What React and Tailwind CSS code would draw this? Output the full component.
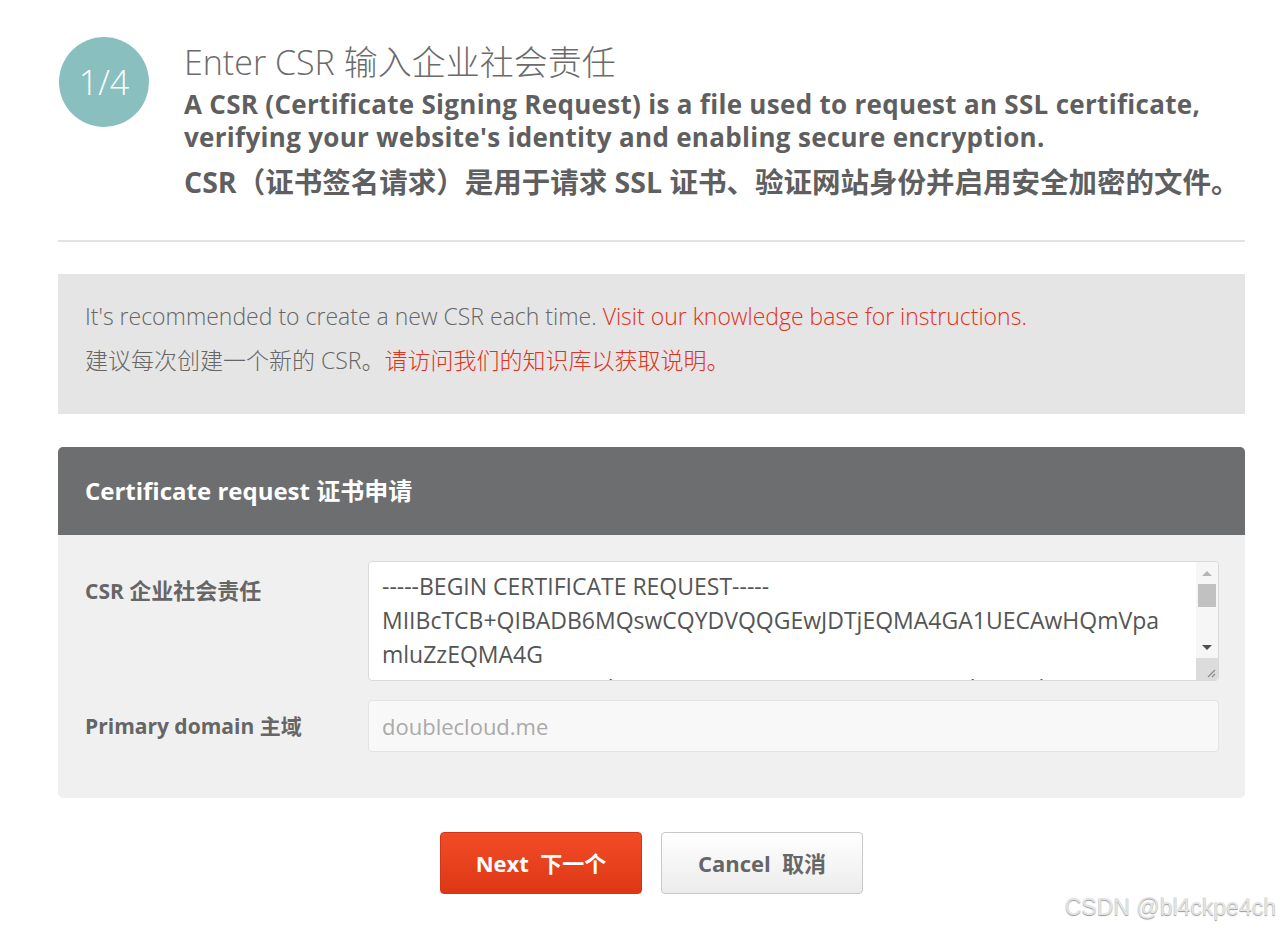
import React from "react";

const FONT = "font-['Open_Sans','Noto_Sans_CJK_SC',sans-serif]";

// CSR 文本框内容（按参考图逐行排好）
const CSR_LINES = [
  "-----BEGIN CERTIFICATE REQUEST-----",
  "MIIBcTCB+QIBADB6MQswCQYDVQQGEwJDTjEQMA4GA1UECAwHQmVpa",
  "mluZzEQMA4G",
  "A1UEBwwHQmVpamluZzEQMA4GA1UECgwHRG91YmxlQ2xvdWQxEDAOBgNVBAsM",
];

function StepHeader() {
  return (
    <div className="flex items-start pt-[37px]">
      <div className="ml-px flex h-[90px] w-[90px] shrink-0 items-center justify-center rounded-full bg-[#8abfbf]">
        <span className="text-[34px] font-light text-white">1/4</span>
      </div>
      <div className="ml-[35px] pt-[5px]">
        <h1 className="text-[34px] font-light leading-[40px] text-[#6b6b6b]">
          Enter CSR 输入企业社会责任
        </h1>
        <p className="mt-[6px] text-[26px] font-bold leading-[33px] tracking-[0.3px] text-[#5f5f5f]">
          A CSR (Certificate Signing Request) is a file used to request an SSL certificate,
          <br />
          verifying your website's identity and enabling secure encryption.
        </p>
        <p className="mt-[8px] text-[28.5px] font-bold leading-[40px] text-[#5f5f5f]">
          CSR（证书签名请求）是用于请求 SSL 证书、验证网站身份并启用安全加密的文件。
        </p>
      </div>
    </div>
  );
}

function Notice() {
  return (
    <div className="mt-[32px] bg-[#e5e5e5] px-[27px] pt-[27px] pb-[39px] text-[23px] font-light leading-[30px] text-[#666]">
      <p>
        It's recommended to create a new CSR each time.{" "}
        <a className="text-[#e0321c]">Visit our knowledge base for instructions.</a>
      </p>
      <p className="mt-[14px]">
        建议每次创建一个新的 CSR。
        <a className="text-[#e0321c]">请访问我们的知识库以获取说明。</a>
      </p>
    </div>
  );
}

function FakeTextarea() {
  return (
    <div className="relative h-[120px] flex-1 overflow-hidden rounded-[4px] border border-[#d9d9d9] bg-white">
      <div className="pt-[7px] pl-[13px] pr-[30px] text-[23px] leading-[34px] text-[#555]">
        {CSR_LINES.map((line, i) => (
          <div key={i} className="whitespace-nowrap">
            {line}
          </div>
        ))}
      </div>
      {/* 滚动条 */}
      <div className="absolute top-0 right-0 bottom-0 flex w-[22px] flex-col bg-[#f6f6f6]">
        <div className="flex h-[22px] items-center justify-center">
          <div className="h-0 w-0 border-x-[5px] border-b-[5px] border-x-transparent border-b-[#b5b5b5]" />
        </div>
        <div className="mx-[2px] h-[23px] bg-[#c1c1c1]" />
        <div className="flex-1" />
        <div className="flex h-[22px] items-center justify-center">
          <div className="h-0 w-0 border-x-[5px] border-t-[5px] border-x-transparent border-t-[#505050]" />
        </div>
        <div className="relative h-[22px] bg-[#dcdcdc]">
          <svg className="absolute right-[2px] bottom-[2px]" width="10" height="10" viewBox="0 0 10 10">
            <path d="M9 2 L2 9 M9 6 L6 9" stroke="#8a8a8a" strokeWidth="1.2" />
          </svg>
        </div>
      </div>
    </div>
  );
}

function RequestCard() {
  return (
    <div className="mt-[33px] overflow-hidden rounded-[5px] bg-[#f0f0f0]">
      <div className="flex h-[88px] items-center bg-[#6d6e70] px-[27px]">
        <h2 className="text-[24px] font-bold text-white">Certificate request 证书申请</h2>
      </div>
      <div className="px-[26px] pt-[26px] pb-[46px] pl-[27px]">
        <div className="flex items-start">
          <label className="w-[283px] shrink-0 pt-[14px] text-[21px] font-bold leading-[30px] text-[#666]">
            CSR <span className="text-[22px]">企业社会责任</span>
          </label>
          <FakeTextarea />
        </div>
        <div className="mt-[19px] flex items-center">
          <label className="w-[283px] shrink-0 text-[21px] font-bold leading-[30px] text-[#666]">
            Primary domain 主域
          </label>
          <div className="flex h-[52px] flex-1 items-center rounded-[4px] border border-[#e3e3e3] bg-[#f8f8f8] px-[13px] text-[22px] text-[#aaa]">
            doublecloud.me
          </div>
        </div>
      </div>
    </div>
  );
}

export default function App() {
  return (
    <div className={`relative min-h-[932px] bg-white pl-[58px] pr-[35px] ${FONT}`}>
      <StepHeader />
      <hr className="mt-[38px] border-t-2 border-[#e3e3e3]" />
      <Notice />
      <RequestCard />

      <div className="mt-[34px] flex justify-center gap-[19px]">
        <button className="flex h-[62px] w-[202px] items-center justify-center rounded-[4px] border border-[#d0361a] bg-gradient-to-b from-[#f24c26] to-[#dd3716] text-[22px] font-bold text-white">
          Next&nbsp;&nbsp;下一个
        </button>
        <button className="flex h-[62px] w-[202px] items-center justify-center rounded-[4px] border border-[#c8c8c8] bg-gradient-to-b from-white to-[#ececec] text-[22px] font-bold text-[#666]">
          Cancel&nbsp;&nbsp;取消
        </button>
      </div>

      {/* 水印 */}
      <div className="absolute right-[4px] bottom-[8px] font-['Liberation_Sans',sans-serif] text-[23px] text-[#e4e4e4] [text-shadow:0_1px_1px_#9a9a9a]">
        CSDN @bl4ckpe4ch
      </div>
    </div>
  );
}
